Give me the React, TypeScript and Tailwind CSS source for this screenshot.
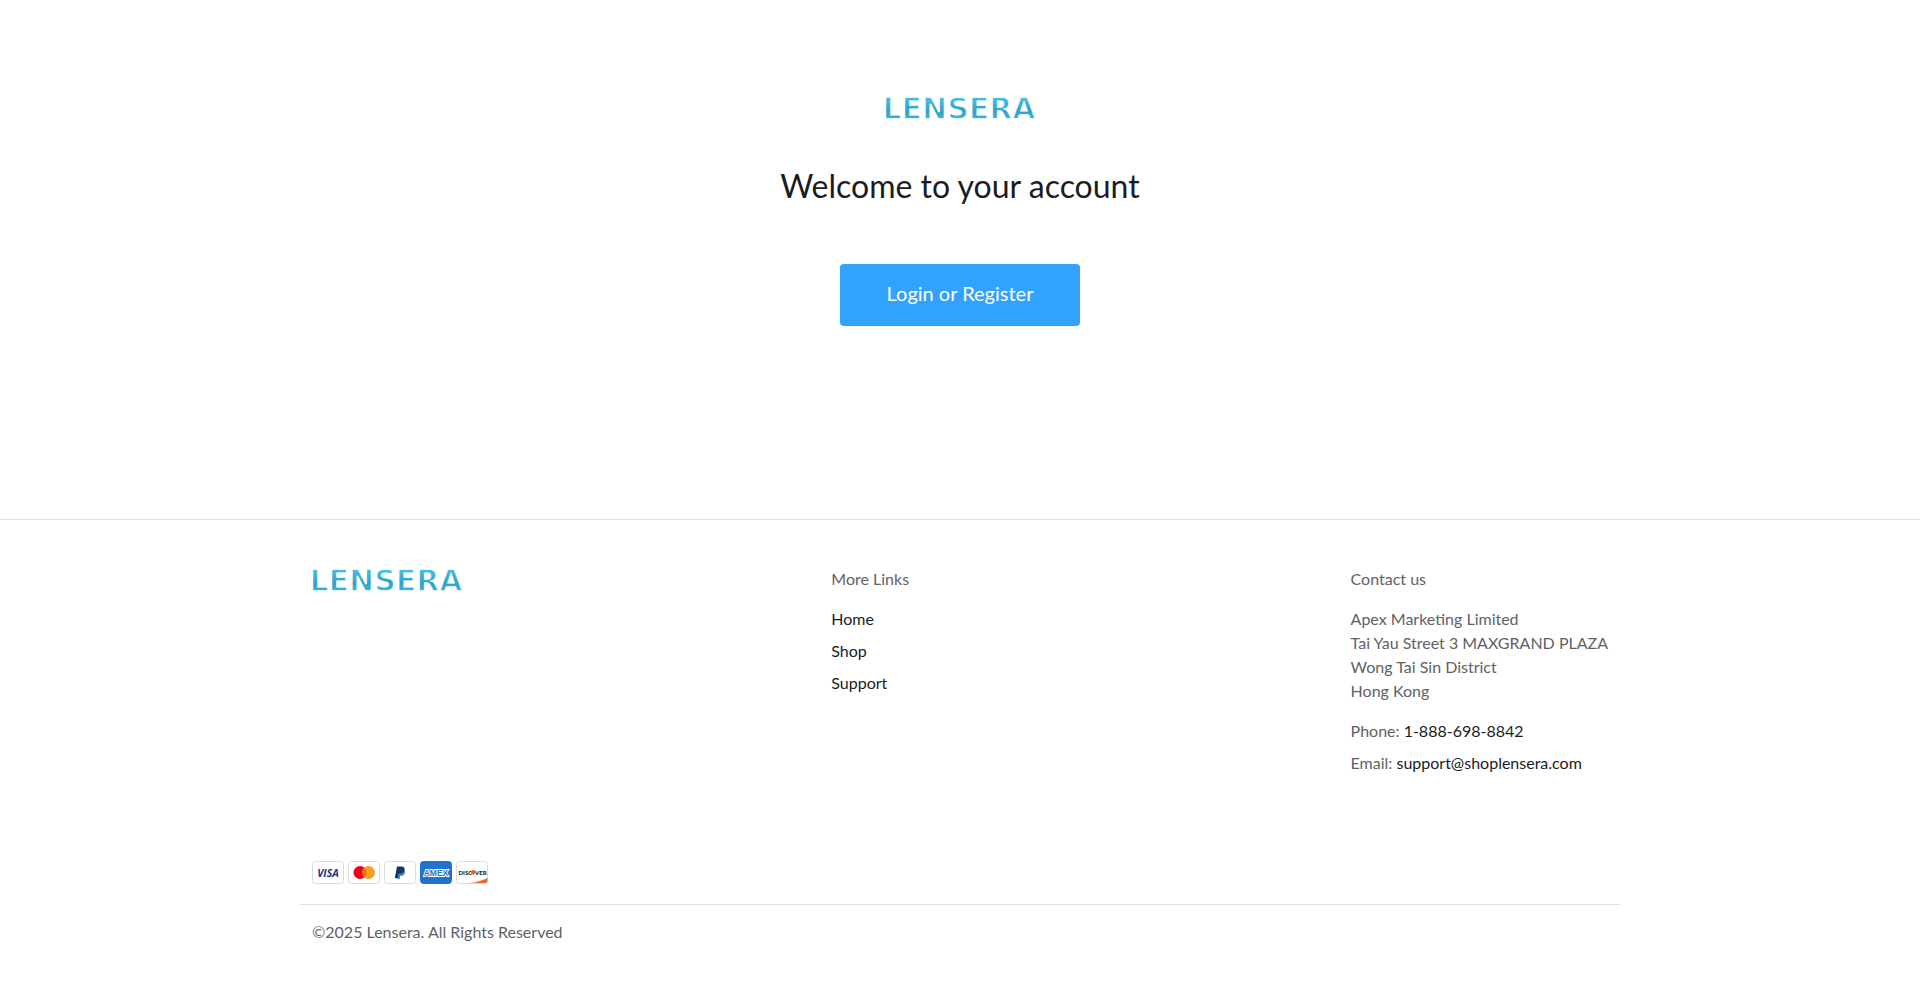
import { useId, type ReactNode } from "react";

function Logo() {
  const gradient = useId();
  return (
    <a href="#home" className="block">
      <svg viewBox="0 0 150 20" className="block h-5 w-[150px] overflow-visible">
        <defs>
          <linearGradient id={gradient} gradientUnits="userSpaceOnUse" x1="0" y1="0" x2="0" y2="20">
            <stop offset="0" stopColor="#47bfe6" />
            <stop offset="0.65" stopColor="#2fa3c6" />
            <stop offset="1" stopColor="#38b3d8" />
          </linearGradient>
        </defs>
        <text
          x="74"
          y="21"
          textAnchor="middle"
          fontFamily="DejaVu Sans, sans-serif"
          fontWeight="700"
          fontSize="30"
          fill={`url(#${gradient})`}
          stroke="#fff"
          strokeWidth="1.4"
        >
          LENSERA
        </text>
      </svg>
    </a>
  );
}

function Card({ label, fill = "#fff", stroke = "#d9dbe0", children }: { label: string; fill?: string; stroke?: string; children: ReactNode }) {
  return (
    <svg role="img" aria-label={label} viewBox="0 0 32 23" className="h-[23px] w-8">
      <rect x="0.5" y="0.5" width="31" height="22" rx="3" fill={fill} stroke={stroke} />
      {children}
    </svg>
  );
}

function PaymentCards() {
  return (
    <div className="flex gap-1">
      <Card label="Visa">
        <text x="16" y="15.5" textAnchor="middle" fontFamily="Open Sans, sans-serif" fontStyle="italic" fontWeight="700" fontSize="10.5" fill="#1f2f86">
          VISA
        </text>
      </Card>
      <Card label="Mastercard">
        <circle cx="12" cy="11.5" r="6.5" fill="#eb001b" />
        <circle cx="20.5" cy="11.5" r="6.5" fill="#f99f1b" />
        <path d="M16.25 6.58a6.5 6.5 0 0 1 0 9.84a6.5 6.5 0 0 1 0-9.84z" fill="#f26522" />
      </Card>
      <Card label="PayPal">
        <path d="M14.5 8h5.2c1.4 1 1.5 2.4 1 3.8-.5 1.9-1.9 2.7-4 2.7h-.6l-.7 3.3h-3z" fill="#2790c3" />
        <path d="M13 5.5h4.5c2.4 0 3.5 1.4 3 3.6-.6 2.5-2.2 3.5-4.5 3.5h-1.5l-.8 4.4h-2.9z" fill="#1f3265" />
        <path d="M15.2 13.1h1.5c2.1 0 3.5-.8 4.1-2.7.2 3-1.5 4.4-4.1 4.4h-.6l-.7 3.2h-1.3z" fill="#2790c3" />
      </Card>
      <Card label="American Express" fill="#1f72cd" stroke="#1f72cd">
        <text
          x="16"
          y="14.5"
          textAnchor="middle"
          fontFamily="Liberation Sans, sans-serif"
          fontWeight="700"
          fontSize="8.5"
          fill="#1f72cd"
          stroke="#fff"
          strokeWidth="1.8"
          paintOrder="stroke"
        >
          AMEX
        </text>
      </Card>
      <Card label="Discover">
        <path d="M13 22c7-.5 13-2.300 18.500-5v3a2 2 0 0 1-2 2z" fill="#f26a2a" />
        <text x="2.5" y="13.5" fontFamily="Lato, sans-serif" fontWeight="900" fontSize="6" fill="#222">
          DISC
        </text>
        <text x="19" y="13.5" fontFamily="Lato, sans-serif" fontWeight="900" fontSize="6" fill="#222">
          VER
        </text>
        <circle cx="17.2" cy="11.3" r="2.2" fill="#f15a24" />
      </Card>
    </div>
  );
}

const links = ["Home", "Shop", "Support"];

export default function App() {
  return (
    <div className="bg-white font-[Lato,sans-serif] text-base leading-6 text-[#5f6165]">
      <main className="flex flex-col items-center pt-[98px] pb-[193px]">
        <Logo />
        <h1 className="mt-12 text-[32px] leading-10 text-[#1b1c1e]">Welcome to your account</h1>
        <button type="button" className="mt-[58px] h-[62px] w-60 rounded bg-[#31a3ff] pb-1 text-xl text-white">
          Login or Register
        </button>
      </main>

      <footer className="border-t border-[#dfe0e2] pt-[47px]">
        <div className="mx-auto max-w-[1320px]">
          <div className="flex px-3">
            <div className="flex-1 pt-[3px]">
              <Logo />
            </div>
            <nav className="flex-1" aria-label="More Links">
              <h2>More Links</h2>
              <ul className="mt-4 flex flex-col gap-2 text-[#1b1c1e]">
                {links.map((link) => (
                  <li key={link}>
                    <a href={`#${link.toLowerCase()}`}>{link}</a>
                  </li>
                ))}
              </ul>
            </nav>
            <section>
              <h2>Contact us</h2>
              <address className="mt-4 not-italic">
                Apex Marketing Limited
                <br />
                Tai Yau Street 3 MAXGRAND PLAZA
                <br />
                Wong Tai Sin District
                <br />
                Hong Kong
              </address>
              <p className="mt-4">
                Phone:{" "}
                <a href="tel:1-888-698-8842" className="text-[#1b1c1e]">
                  1-888-698-8842
                </a>
              </p>
              <p className="mt-2">
                Email:{" "}
                <a href="mailto:support@shoplensera.com" className="text-[#1b1c1e]">
                  support@shoplensera.com
                </a>
              </p>
            </section>
          </div>
          <div className="mt-[86px] border-b border-[#dfe0e2] px-3 pb-5">
            <PaymentCards />
          </div>
          <p className="px-3 pt-[15px] pb-12">©2025 Lensera. All Rights Reserved</p>
        </div>
      </footer>
    </div>
  );
}
